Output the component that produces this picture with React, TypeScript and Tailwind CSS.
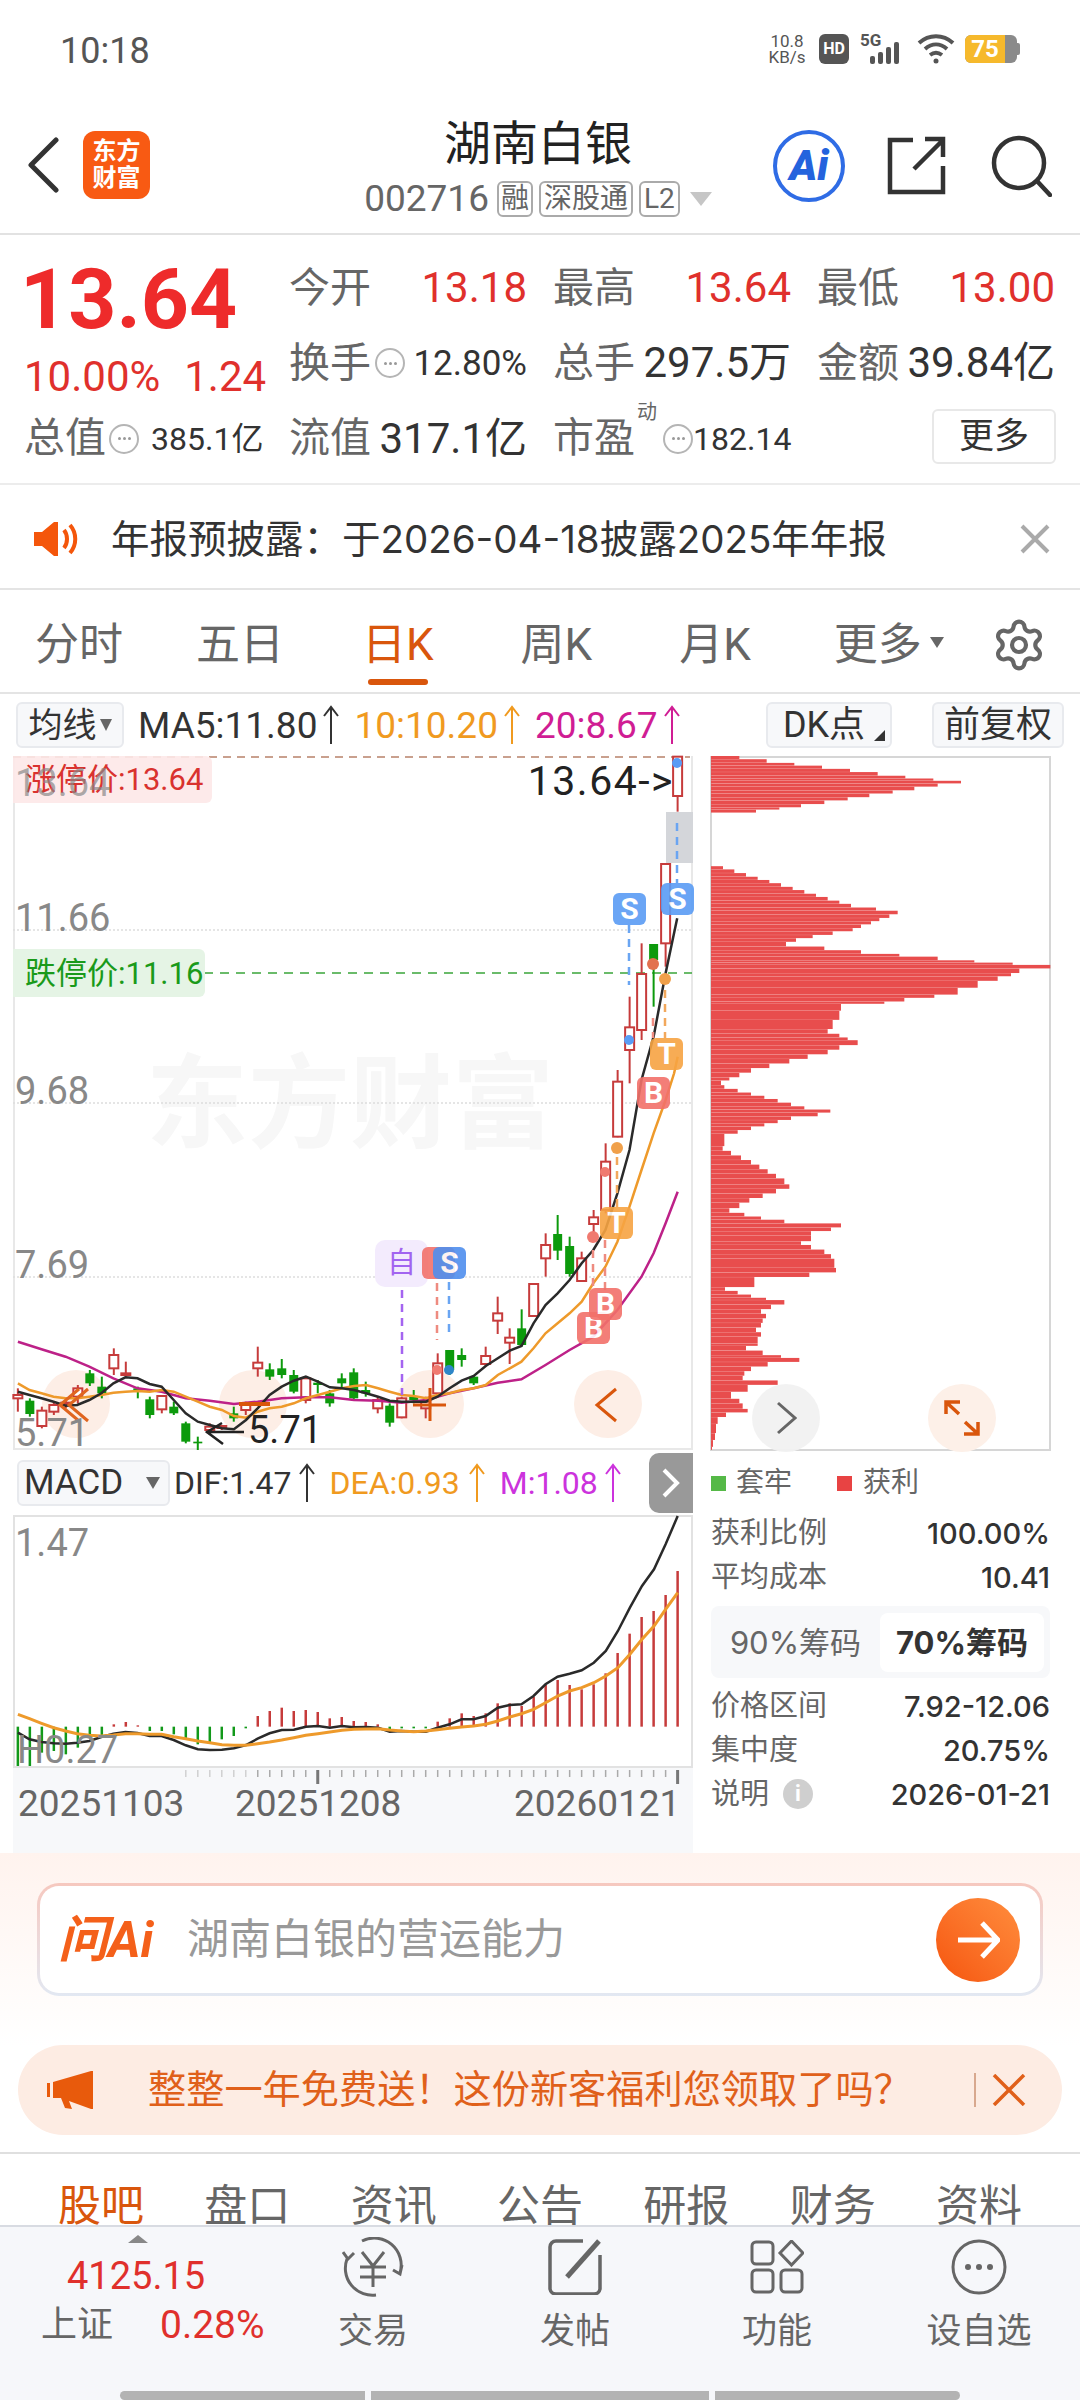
import { Settings } from "lucide-react";

type Candle = [number, number, number, number, "r" | "g"];

// candle data is [wickTop, bodyTop, bodyBottom, wickBottom, colour], y read off the screenshot
const CANDLES: Candle[] = [
  [985, 1005, 1015, 1055, "r"], [1015, 1022, 1062, 1070, "g"], [1040, 1052, 1098, 1105, "r"], [1025, 1035, 1055, 1065, "r"],
  [1020, 1028, 1034, 1045, "r"], [975, 985, 1010, 1030, "r"], [930, 940, 970, 978, "g"], [950, 980, 1000, 1015, "g"],
  [865, 885, 925, 945, "r"], [905, 940, 945, 950, "r"], [980, 985, 995, 1015, "g"], [1010, 1018, 1065, 1075, "g"],
  [1005, 1008, 1048, 1060, "r"], [1025, 1040, 1060, 1065, "g"], [1085, 1090, 1145, 1150, "g"], [1130, 1145, 1150, 1170, "g"],
  [1090, 1100, 1110, 1125, "r"], [1095, 1098, 1104, 1110, "r"], [1040, 1060, 1075, 1085, "g"], [1025, 1030, 1050, 1065, "r"],
  [860, 908, 925, 950, "r"], [910, 928, 950, 960, "g"], [897, 925, 945, 955, "g"], [930, 945, 995, 1000, "g"],
  [950, 955, 1020, 1030, "r"], [960, 968, 975, 1000, "g"], [990, 1000, 1030, 1040, "g"], [940, 955, 970, 985, "g"],
  [925, 937, 1015, 1020, "g"], [965, 990, 1000, 1010, "g"], [1010, 1020, 1045, 1060, "r"], [1030, 1037, 1088, 1100, "g"],
  [1010, 1015, 1072, 1075, "r"], [990, 1010, 1020, 1030, "g"], [1010, 1025, 1045, 1075, "r"], [880, 910, 1000, 1010, "r"],
  [870, 870, 930, 945, "g"], [865, 885, 900, 920, "g"], [945, 950, 970, 975, "g"], [860, 888, 912, 920, "r"],
  [710, 760, 782, 822, "r"], [805, 833, 848, 912, "r"], [748, 805, 855, 860, "g"], [670, 672, 768, 770, "r"],
  [520, 555, 595, 650, "r"], [465, 522, 572, 600, "g"], [530, 558, 642, 650, "g"], [575, 595, 663, 665, "r"],
  [450, 472, 492, 530, "r"], [250, 305, 450, 460, "r"], [30, 65, 230, 232, "r"], [-190, -98, -30, 70, "r"],
  [-350, -258, -90, -60, "r"], [-348, -348, -300, -160, "g"], [-588, -588, -350, -280, "r"], [-910, -910, -792, -745, "r"],
];

const MA5 = "40,995 66,1005 93,1015 120,1025 147,1037 173,1035 200,1020 227,1000 254,970 281,952 308,955 335,972 362,980 389,1020 416,1060 443,1085 470,1095 497,1105 524,1108 551,1080 577,1045 604,1005 631,980 658,962 685,950 712,965 739,982 766,985 793,990 820,1000 847,1010 873,1022 900,1025 927,1025 954,1025 980,1010 1007,985 1034,962 1061,948 1088,918 1115,895 1142,872 1168,858 1195,790 1222,735 1249,700 1276,660 1303,610 1329,570 1356,510 1383,400 1410,270 1437,60 1464,-70 1491,-260 1517,-425";
const MA10 = "40,970 66,990 93,1000 120,1010 147,1015 173,1015 200,1010 227,1005 254,998 281,995 308,993 335,995 362,990 389,995 416,1010 443,1025 470,1040 497,1050 524,1068 551,1073 577,1055 604,1045 631,1040 658,1030 685,1015 712,1005 739,995 766,985 793,978 820,975 847,985 873,995 900,1005 927,1008 954,1015 980,1005 1007,1000 1034,990 1061,985 1088,975 1115,945 1142,925 1168,905 1195,865 1222,820 1249,790 1276,760 1303,725 1329,670 1356,620 1383,545 1410,440 1437,330 1464,220 1491,120 1510,40 1518,-10";
const MA20 = "40,845 93,868 147,890 200,920 254,955 308,985 362,995 416,1015 470,1022 524,1032 577,1025 631,1015 685,1012 739,1012 793,1020 847,1022 900,1028 954,1020 1007,1000 1061,985 1115,968 1168,958 1222,915 1276,870 1329,830 1383,750 1437,650 1464,580 1491,490 1518,395";

const DIF = "40,875 66,895 93,903 120,907 147,908 173,905 200,900 227,888 254,878 281,873 308,876 335,885 362,885 389,897 416,913 443,925 470,927 497,926 524,922 551,912 577,893 604,877 631,867 658,866 685,857 712,855 739,860 766,855 793,859 820,858 847,860 873,872 900,870 927,872 954,872 980,860 1007,850 1034,835 1061,835 1088,825 1115,800 1142,792 1168,790 1195,765 1222,730 1249,707 1276,698 1303,688 1330,665 1357,630 1384,570 1411,500 1438,435 1465,385 1491,310 1518,225";
const DEA = "40,820 66,833 93,847 120,860 147,870 173,878 200,883 227,885 254,882 281,878 308,878 335,880 362,880 389,887 416,893 443,900 470,905 497,911 524,913 551,913 577,908 604,903 631,897 658,890 685,883 712,878 739,873 766,868 793,865 820,864 847,863 873,867 900,870 927,872 954,870 980,866 1007,862 1034,858 1061,855 1088,850 1115,840 1142,828 1168,818 1195,805 1222,785 1249,765 1276,750 1303,740 1330,725 1357,705 1384,680 1411,640 1438,595 1465,555 1491,505 1518,455";

// end of each macd bar, zero line sits at 857
const MACD_BARS = [975, 975, 935, 930, 940, 920, 885, 885, 850, 843, 853, 870, 870, 880, 897, 910, 905, 895, 885, 862, 825, 810, 800, 810, 807, 813, 832, 828, 840, 843, 850, 865, 862, 862, 862, 842, 832, 817, 825, 817, 787, 787, 795, 768, 732, 717, 732, 745, 730, 697, 636, 578, 528, 510, 462, 390];

// chip distribution outline, [y, width] from the right hand panel
const CHIPS: [number, number][] = [
  [15, 85], [22, 167], [30, 250], [36, 333], [43, 417], [50, 500], [58, 583], [64, 667], [69, 750], [75, 680], [82, 610], [90, 545], [97, 475], [105, 410], [112, 340], [120, 270], [127, 205], [132, 135],
  [255, 36], [262, 70], [270, 105], [278, 140], [285, 175], [292, 210], [300, 245], [307, 280], [315, 315], [322, 350], [330, 385], [337, 420], [345, 495], [352, 560], [360, 535], [368, 505], [375, 480], [382, 450], [390, 425], [397, 365], [405, 305], [412, 255], [420, 225], [430, 340], [438, 450], [446, 565], [452, 680], [460, 790], [465, 905], [470, 1018], [478, 925], [488, 900], [495, 860], [505, 800], [520, 740], [535, 670], [542, 580], [550, 520], [555, 390], [570, 385], [590, 365], [610, 350], [620, 385], [628, 410], [634, 440], [645, 385], [655, 350], [665, 290], [675, 235], [685, 175], [695, 120], [705, 85], [715, 55], [722, 30],
  [732, 40], [740, 80], [748, 120], [755, 160], [762, 200], [770, 240], [778, 280], [785, 358], [792, 320], [800, 240], [808, 200], [815, 160], [822, 120], [830, 80], [838, 40],
  [865, 35], [875, 60], [885, 90], [895, 120], [905, 145], [915, 170], [925, 195], [935, 220], [948, 235], [958, 195], [968, 155], [978, 115], [988, 85], [1000, 55], [1010, 100], [1018, 150], [1025, 220], [1033, 390], [1042, 360], [1050, 300], [1060, 300], [1072, 270], [1080, 300], [1090, 340], [1100, 360], [1110, 370], [1130, 375], [1140, 295], [1150, 130],
  [1172, 42], [1180, 80], [1188, 120], [1195, 165], [1200, 220], [1210, 180], [1220, 150], [1230, 165], [1240, 155], [1250, 150], [1260, 135], [1270, 150], [1280, 140], [1295, 140], [1300, 105], [1310, 155], [1320, 210], [1326, 265], [1335, 170], [1345, 120], [1355, 100], [1365, 95], [1375, 200], [1385, 110], [1400, 60], [1415, 85], [1425, 95], [1437, 110], [1445, 45], [1455, 20], [1470, 15], [1490, 12], [1505, 6], [1520, 3],
];

const cx = (i: number) => (40 + 26.87 * i) / 2.24;
const ky = (z: number) => 1060 + z / 3;
const my = (z: number) => 1440 + z / 3;
const pts = (s: string, f: (z: number) => number) =>
  s.split(" ").map((p) => {
    const [x, y] = p.split(",").map(Number);
    return `${(x / 2.24).toFixed(1)},${f(y).toFixed(1)}`;
  }).join(" ");

function Dots({ className = "" }: { className?: string }) {
  return (
    <span className={`inline-flex h-[30px] w-[30px] shrink-0 items-center justify-center gap-[2px] rounded-full border-2 border-[#b5b5b5] ${className}`}>
      <i className="h-[3px] w-[3px] rounded-full bg-[#999]" />
      <i className="h-[3px] w-[3px] rounded-full bg-[#999]" />
      <i className="h-[3px] w-[3px] rounded-full bg-[#999]" />
    </span>
  );
}

function Arrow({ color }: { color: string }) {
  return (
    <svg width="18" height="40" viewBox="0 0 18 40" className="shrink-0" fill="none" stroke={color} strokeWidth="2">
      <path d="M9 39V3M2 11l7-9 7 9" />
    </svg>
  );
}

function Stat({ label, value, small, red }: { label: string; value: string; small?: boolean; red?: boolean }) {
  return (
    <div className="flex w-[238px] items-center justify-between">
      <span className="text-[41px] leading-none text-[#666]">{label}</span>
      <span className={`leading-none ${small ? "text-[32px]" : "text-[42px]"} ${red ? "text-[#e0302c]" : "text-[#333]"}`}>{value}</span>
    </div>
  );
}

function Marker({ label, left, top, color }: { label: string; left: string; top: string; color: string }) {
  return (
    <div className={`absolute flex h-[32px] w-[33px] items-center justify-center rounded-[6px] text-[30px] leading-none font-bold text-white opacity-90 ${left} ${top} ${color}`}>
      {label}
    </div>
  );
}

function Row({ label, value, extra }: { label: string; value: string; extra?: boolean }) {
  return (
    <div className="flex h-[44px] items-center justify-between">
      <span className="flex items-center gap-[14px] text-[29px] leading-none text-[#666]">
        {label}
        {extra && (
          <i className="flex h-[30px] w-[30px] items-center justify-center rounded-full bg-[#cfcfcf] text-[22px] font-bold text-white not-italic">i</i>
        )}
      </span>
      <span className="text-[29px] leading-none font-medium text-[#333] [font-family:Inter,'Noto_Sans_CJK_SC',sans-serif]">{value}</span>
    </div>
  );
}

function NavItem({ label, children }: { label: string; children: React.ReactNode }) {
  return (
    <div className="flex w-[202px] flex-col items-center">
      <div className="flex h-[62px] items-center justify-center">{children}</div>
      <span className="mt-[16px] text-[35px] leading-none text-[#666]">{label}</span>
    </div>
  );
}

export default function App() {
  return (
    <div className="h-[2400px] w-[1080px] overflow-hidden bg-white [font-family:Roboto,'Noto_Sans_CJK_SC',sans-serif]">
      {/* status bar */}
      <div className="flex h-[105px] items-start justify-between pt-[33px] pr-[60px] pl-[60px]">
        <span className="text-[36px] leading-[36px] text-[#555]">10:18</span>
        <div className="flex items-center text-[#555]">
          <div className="flex w-[40px] flex-col items-center text-[17px] leading-[16px]">
            <span>10.8</span>
            <span>KB/s</span>
          </div>
          <div className="ml-[12px] flex h-[30px] w-[30px] items-center justify-center rounded-[6px] bg-[#555] text-[16px] font-bold text-white">HD</div>
          <div className="relative ml-[11px] h-[30px] w-[45px]">
            <span className="absolute top-[-2px] left-0 text-[17px] leading-none font-bold">5G</span>
            <svg width="45" height="30" viewBox="0 0 45 30" fill="#555" className="absolute top-0 left-0">
              <rect x="10" y="22" width="5" height="8" rx="2" />
              <rect x="18" y="18" width="5" height="12" rx="2" />
              <rect x="26" y="13" width="5" height="17" rx="2" />
              <rect x="34" y="8" width="5" height="22" rx="2" />
            </svg>
          </div>
          <svg width="38" height="30" viewBox="0 0 38 30" fill="none" stroke="#555" strokeWidth="4" className="ml-[12px]">
            <path d="M2 9c10-9 24-9 34 0M8 15c7-6 15-6 22 0M13 21c4-3 8-3 12 0" />
            <circle cx="19" cy="27" r="2.5" fill="#555" stroke="none" />
          </svg>
          <div className="ml-[10px] flex h-[28px] w-[52px] overflow-hidden rounded-[6px] bg-[#8a8a8a]">
            <div className="flex w-[40px] items-center justify-center bg-[#f6b92c] text-[24px] leading-none font-bold text-white">75</div>
          </div>
          <div className="h-[12px] w-[3px] rounded-r-[2px] bg-[#8a8a8a]" />
        </div>
      </div>

      {/* header */}
      <div className="relative flex h-[130px] items-center border-b-2 border-[#e2e2e2] pb-[8px] pl-[27px]">
        <svg width="32" height="56" viewBox="0 0 32 56" fill="none" stroke="#333" strokeWidth="5" strokeLinecap="round" strokeLinejoin="round">
          <path d="M29 3L4 28l25 25" />
        </svg>
        <div className="ml-[24px] flex h-[68px] w-[67px] flex-col items-center justify-center rounded-[12px] bg-[#f85a13] text-[24px] leading-[27px] font-bold text-white">
          <span>东方</span>
          <span>财富</span>
        </div>
        <div className="absolute top-[10px] left-[348px] flex w-[380px] flex-col items-center">
          <span className="text-[47px] leading-[58px] text-[#222]">湖南白银</span>
          <div className="mt-[7px] flex items-center">
            <span className="text-[37px] leading-none text-[#666]">002716</span>
            <span className="ml-[8px] rounded-[6px] border-2 border-[#aaa] px-[2px] py-[1px] text-[28px] leading-[30px] text-[#666]">融</span>
            <span className="ml-[6px] rounded-[6px] border-2 border-[#aaa] px-[3px] py-[1px] text-[28px] leading-[30px] text-[#666]">深股通</span>
            <span className="ml-[6px] rounded-[6px] border-2 border-[#aaa] px-[3px] py-[1px] text-[28px] leading-[30px] text-[#666]">L2</span>
            <i className="ml-[10px] h-0 w-0 border-x-[11px] border-t-[14px] border-x-transparent border-t-[#c6c6c6]" />
          </div>
        </div>
        <div className="absolute top-[25px] left-[773px] flex h-[72px] w-[72px] items-center justify-center rounded-full border-[4px] border-[#2f6ce5] text-[42px] leading-none font-black text-[#2463dd] italic">
          Ai
        </div>
        <svg width="60" height="60" viewBox="0 0 60 60" fill="none" stroke="#333" strokeWidth="4.5" className="absolute top-[31px] left-[887px]">
          <path d="M26 4H3v52h53V30M27 33L56 4M38 3h18v18" />
        </svg>
        <svg width="62" height="62" viewBox="0 0 62 62" fill="none" stroke="#333" strokeWidth="4.5" strokeLinecap="round" className="absolute top-[30px] left-[990px]">
          <circle cx="29" cy="28" r="25" />
          <path d="M47 46l13 14" />
        </svg>
      </div>

      {/* quote */}
      <div className="flex h-[250px] flex-col border-b-2 border-[#ececec] pt-[32px] pl-[24px]">
        <div className="flex">
          <div className="flex h-[117px] w-[265px] flex-col">
            <span className="-ml-[4px] text-[84px] leading-[66px] font-bold text-[#ee2b2b]">13.64</span>
            <div className="mt-[23px] flex text-[42px] leading-none text-[#e0302c]">
              <span>10.00%</span>
              <span className="ml-[24px]">1.24</span>
            </div>
          </div>
          <div className="flex flex-col gap-[33px]">
            <div className="flex gap-[26px]">
              <Stat label="今开" value="13.18" red />
              <Stat label="最高" value="13.64" red />
              <Stat label="最低" value="13.00" red />
            </div>
            <div className="flex gap-[26px]">
              <div className="flex w-[238px] items-center">
                <span className="text-[41px] leading-none text-[#666]">换手</span>
                <Dots className="ml-[4px]" />
                <span className="ml-auto text-[35px] leading-none text-[#333]">12.80%</span>
              </div>
              <Stat label="总手" value="297.5万" />
              <Stat label="金额" value="39.84亿" />
            </div>
          </div>
        </div>
        <div className="mt-[27px] flex items-center">
          <div className="flex w-[265px] items-center">
            <span className="text-[41px] leading-none text-[#666]">总值</span>
            <Dots className="ml-[3px]" />
            <span className="ml-[12px] text-[32px] leading-none text-[#333]">385.1亿</span>
          </div>
          <Stat label="流值" value="317.1亿" />
          <div className="ml-[26px] flex w-[238px] items-center">
            <span className="text-[41px] leading-none whitespace-nowrap text-[#666]">市盈</span>
            <div className="relative ml-[28px] flex shrink-0 items-center">
              <span className="absolute top-[-22px] left-[-26px] text-[20px] leading-none text-[#666]">动</span>
              <Dots />
            </div>
            <span className="ml-auto text-[32px] leading-none text-[#333]">182.14</span>
          </div>
          <div className="ml-[141px] flex h-[55px] w-[124px] -translate-y-[2px] items-center justify-center rounded-[6px] border-2 border-[#e8e8e8] text-[35px] leading-none text-[#333]">更多</div>
        </div>
      </div>

      {/* notice */}
      <div className="flex h-[105px] items-center border-b-2 border-[#e4e4e4] pt-[5px] pr-[30px] pl-[34px]">
        <svg width="44" height="36" viewBox="0 0 44 36" fill="#f4560b">
          <path d="M0 11h8L20 1h4v34h-4L8 25H0z" />
          <path d="M30 9c4 5 4 13 0 18M36 4c7 8 7 20 0 28" fill="none" stroke="#f4560b" strokeWidth="4" />
        </svg>
        <span className="ml-[33px] text-[38.5px] leading-none whitespace-nowrap text-[#333] [font-family:Inter,'Noto_Sans_CJK_SC',sans-serif]">年报预披露：于2026-04-18披露2025年年报</span>
        <svg width="30" height="30" viewBox="0 0 30 30" fill="none" stroke="#aaa" strokeWidth="4" className="ml-auto">
          <path d="M2 2l26 26M28 2L2 28" />
        </svg>
      </div>

      {/* period tabs */}
      <div className="relative flex h-[104px] items-center border-b-2 border-[#e4e4e4] pt-[7px] pl-[35px] text-[44px] leading-none text-[#666]">
        <span>分时</span>
        <span className="ml-[73px]">五日</span>
        <span className="ml-[78px] text-[#d9560c]">日K</span>
        <span className="ml-[87px]">周K</span>
        <span className="ml-[87px]">月K</span>
        <span className="ml-[83px]">更多</span>
        <i className="mt-[-4px] ml-[8px] h-0 w-0 border-x-[7px] border-t-[11px] border-x-transparent border-t-[#666]" />
        <Settings size={56} strokeWidth={1.8} className="ml-[47px] text-[#666]" />
        <div className="absolute bottom-[7px] left-[368px] h-[6px] w-[60px] rounded-full bg-[#d9560c]" />
      </div>

      {/* chart toolbar */}
      <div className="flex h-[62px] items-start pt-[8px] pl-[16px]">
        <div className="flex h-[46px] w-[108px] items-center justify-center gap-[3px] rounded-[6px] border-2 border-[#e8eaee] bg-[#f7f8fa] text-[34px] leading-none text-[#333]">
          均线
          <i className="h-0 w-0 border-x-[6px] border-t-[12px] border-x-transparent border-t-[#666]" />
        </div>
        <div className="ml-[14px] flex h-[46px] w-[628px] items-center text-[37px] leading-none text-[#333]">
          MA5:11.80
          <span className="ml-[5px]"><Arrow color="#333" /></span>
          <span className="ml-[14px] text-[#f09a1f]">10:10.20</span>
          <span className="ml-[5px]"><Arrow color="#f09a1f" /></span>
          <span className="ml-[14px] text-[#d01d94]">20:8.67</span>
          <span className="ml-[5px]"><Arrow color="#d01d94" /></span>
        </div>
        <div className="relative flex h-[46px] w-[126px] items-center justify-center rounded-[6px] border-2 border-[#e8eaee] bg-[#f7f8fa] pr-[10px] text-[36px] leading-none text-[#333]">
          DK点
          <i className="absolute right-[5px] bottom-[5px] h-0 w-0 border-b-[11px] border-l-[11px] border-b-[#333] border-l-transparent" />
        </div>
        <div className="ml-[40px] flex h-[46px] w-[132px] items-center justify-center rounded-[6px] border-2 border-[#e8eaee] bg-[#f7f8fa] text-[36px] leading-none text-[#333]">前复权</div>
      </div>

      {/* kline + chip distribution */}
      <div className="flex h-[694px] pl-[13px]">
        <div className="relative h-[694px] w-[680px] border-x-2 border-b-2 border-[#e8e8e8]">
          <div className="absolute top-[298px] left-[131px] text-[102px] leading-none font-bold whitespace-nowrap text-[#f7f7f7]">东方财富</div>
          <div className="absolute top-[56px] right-0 h-[51px] w-[27px] translate-x-[2px] bg-[#d4d6da]" />
          {/* chart nav buttons sit under the candles, their glyphs over them */}
          <div className="absolute top-[614px] left-[27px] h-[68px] w-[68px] rounded-full bg-[#fdeee6]" />
          <div className="absolute top-[614px] left-[204px] h-[68px] w-[68px] rounded-full bg-[#fdeee6]" />
          <div className="absolute top-[614px] left-[381px] h-[68px] w-[68px] rounded-full bg-[#fdeee6]" />
          <div className="absolute top-[614px] left-[559px] h-[68px] w-[68px] rounded-full bg-[#fdeee6]" />
          <svg width="680" height="694" viewBox="13 756 680 694" className="absolute top-0 left-[-2px] overflow-visible" fill="none">
            <path d="M13 757H690" stroke="#c9a08e" strokeWidth="2" strokeDasharray="8 6" />
            <path d="M13 930H692M13 1103H692M13 1277H692" stroke="#ddd" strokeWidth="1.5" strokeDasharray="2 2" />
            <path d="M204 973H692" stroke="#3aa53a" strokeWidth="1.5" strokeDasharray="9 7" />
            {CANDLES.map(([wt, bt, bb, wb, c], i) => {
              const x = cx(i);
              return c === "r" ? (
                <g key={i} stroke="#c63b3b" strokeWidth="2">
                  <path d={`M${x} ${ky(wt)}V${ky(wb)}`} />
                  <rect x={x - 4.5} y={ky(bt)} width="9" height={(bb - bt) / 3} fill="#fff" />
                </g>
              ) : (
                <g key={i} stroke="#0c9a0c" strokeWidth="2">
                  <path d={`M${x} ${ky(wt)}V${ky(wb)}`} />
                  <rect x={x - 4.5} y={ky(bt)} width="9" height={(bb - bt) / 3} fill="#0c9a0c" stroke="none" />
                </g>
              );
            })}
            <polyline points={pts(MA20, ky)} stroke="#bd2188" strokeWidth="2.5" />
            <polyline points={pts(MA10, ky)} stroke="#ee9a2b" strokeWidth="2.5" />
            <polyline points={pts(MA5, ky)} stroke="#2a2a2a" strokeWidth="2.5" />
            <path d="M629 925V985" stroke="#6aa5f2" strokeWidth="2.5" strokeDasharray="8 6" />
            <path d="M677 823V883" stroke="#6aa5f2" strokeWidth="2.5" strokeDasharray="8 6" />
            <path d="M665 990V1038" stroke="#f2a85c" strokeWidth="2.5" strokeDasharray="8 6" />
            <path d="M653 1018V1038" stroke="#ee8b80" strokeWidth="2.5" strokeDasharray="8 6" />
            <path d="M617 1157V1207" stroke="#f2a85c" strokeWidth="2.5" strokeDasharray="8 6" />
            <path d="M593 1250V1290M605 1240V1290" stroke="#ee8b80" strokeWidth="2.5" strokeDasharray="8 6" />
            <path d="M402 1290V1395" stroke="#a464f0" strokeWidth="2.5" strokeDasharray="8 6" />
            <path d="M437 1283V1340" stroke="#ee8b80" strokeWidth="2.5" strokeDasharray="8 6" />
            <path d="M449 1282V1338" stroke="#6aa5f2" strokeWidth="2.5" strokeDasharray="8 6" />
            <circle cx="677" cy="763" r="5" fill="#5a9cf5" />
            <circle cx="629" cy="1040" r="5" fill="#5a9cf5" />
            <circle cx="653" cy="964" r="6" fill="#e2714f" />
            <circle cx="665" cy="979" r="6" fill="#f0a04a" />
            <circle cx="617" cy="1148" r="6" fill="#f0a04a" />
            <circle cx="605" cy="1172" r="5" fill="#f07a70" />
            <circle cx="593" cy="1237" r="6" fill="#f07a70" />
            <circle cx="437" cy="1370" r="5" fill="#f07a70" />
            <circle cx="449" cy="1370" r="5" fill="#2e86c8" />
            <path d="M222 1423l-15 9 16 12M206 1432h38" stroke="#222" strokeWidth="2.5" />
            <path d="M79 1389L60 1405l19 16M88 1389L69 1405l19 16" stroke="#e0651f" strokeWidth="3" />
            <path d="M239 1404H270" stroke="#d9560c" strokeWidth="4" />
            <path d="M430 1388V1421M413 1405H446" stroke="#d9560c" strokeWidth="3" />
            <path d="M616 1389L597 1405l19 16" stroke="#d9560c" strokeWidth="3" />
          </svg>

          <div className="absolute top-[0px] left-[-2px] flex h-[47px] w-[199px] items-center rounded-r-[6px] bg-[#fde8e8]/90 pl-[12px] text-[31px] leading-none text-[#d9322e]">涨停价:13.64</div>
          <span className="absolute top-[8px] left-[0px] text-[38px] leading-none text-[#888]/70">13.64</span>
          <span className="absolute top-[5px] right-[17px] text-[41px] leading-none tracking-[1.5px] text-[#222]">13.64-&gt;</span>
          <span className="absolute top-[143px] left-[0px] text-[38px] leading-none text-[#888]">11.66</span>
          <div className="absolute top-[193px] left-[-2px] flex h-[48px] w-[192px] items-center rounded-r-[6px] bg-[#e5f4e5] pl-[12px] text-[31px] leading-none text-[#1a9a1a]">跌停价:11.16</div>
          <span className="absolute top-[316px] left-[0px] text-[38px] leading-none text-[#888]">9.68</span>
          <span className="absolute top-[490px] left-[0px] text-[38px] leading-none text-[#888]">7.69</span>
          <span className="absolute top-[658px] left-[0px] text-[38px] leading-none text-[#888]">5.71</span>
          <span className="absolute top-[655px] left-[233px] text-[38px] leading-none text-[#222]">5.71</span>

          <Marker label="S" left="left-[598px]" top="top-[137px]" color="bg-[#5a9cf5]" />
          <Marker label="S" left="left-[646px]" top="top-[127px]" color="bg-[#5a9cf5]" />
          <Marker label="T" left="left-[635px]" top="top-[282px]" color="bg-[#f7a443]" />
          <Marker label="B" left="left-[622px]" top="top-[321px]" color="bg-[#f2716a]" />
          <Marker label="T" left="left-[585px]" top="top-[451px]" color="bg-[#f7a443]" />
          <Marker label="B" left="left-[562px]" top="top-[556px]" color="bg-[#f2716a]" />
          <Marker label="B" left="left-[574px]" top="top-[532px]" color="bg-[#f2716a]" />
          <div className="absolute top-[484px] left-[360px] flex h-[47px] w-[53px] items-center justify-center rounded-[10px] bg-[#f3ebfd] text-[29px] leading-none text-[#a264f0]">自</div>
          <Marker label="" left="left-[407px]" top="top-[491px]" color="bg-[#f2716a]" />
          <Marker label="S" left="left-[418px]" top="top-[491px]" color="bg-[#4f8fee]" />
        </div>

        <div className="relative ml-[17px] h-[695px] w-[341px] border-2 border-[#d6d6d6]">
          <svg width="341" height="695" viewBox="0 0 341 695" className="absolute top-[-2px] left-[-2px]" fill="#e84d4d">
            {CHIPS.map(([y, w], i) => {
              const next = CHIPS[i + 1];
              const h = next && next[0] - y <= 40 ? (next[0] - y) / 2.178 : 3;
              return <rect key={i} x="1" y={(y - 15) / 2.178} width={w / 3} height={Math.max(h - 0.15, 1)} />;
            })}
          </svg>
          <div className="absolute top-[626px] left-[40px] flex h-[68px] w-[68px] items-center justify-center rounded-full bg-[#f1f1f1]/95">
            <svg width="22" height="34" viewBox="0 0 22 34" fill="none" stroke="#666" strokeWidth="3"><path d="M3 2l17 15L3 32" /></svg>
          </div>
          <div className="absolute top-[626px] left-[216px] flex h-[68px] w-[68px] items-center justify-center rounded-full bg-[#fdf0e8]">
            <svg width="36" height="36" viewBox="0 0 36 36" fill="none" stroke="#d9560c" strokeWidth="3.5"><path d="M2 14V2h14M2 2l13 12M34 22v12H20M34 34L21 22" /></svg>
          </div>
        </div>
      </div>

      {/* macd + chip summary */}
      <div className="flex h-[403px]">
        <div className="w-[692px] pl-[13px]">
          <div className="relative flex h-[65px] items-center">
            <div className="ml-[4px] flex h-[46px] w-[153px] items-center justify-between rounded-[6px] border-2 border-[#e8eaee] bg-[#f7f8fa] pr-[8px] pl-[5px] text-[35px] leading-none text-[#333]">
              MACD
              <i className="h-0 w-0 border-x-[7px] border-t-[12px] border-x-transparent border-t-[#666]" />
            </div>
            <div className="ml-[4px] flex items-center text-[32px] leading-none text-[#333]">
              DIF:1.47
              <span className="ml-[6px]"><Arrow color="#333" /></span>
              <span className="ml-[14px] text-[#f09a1f]">DEA:0.93</span>
              <span className="ml-[8px]"><Arrow color="#f09a1f" /></span>
              <span className="ml-[14px] text-[#cc33dd]">M:1.08</span>
              <span className="ml-[6px]"><Arrow color="#cc33dd" /></span>
            </div>
            <div className="absolute top-[3px] right-[-1px] flex h-[60px] w-[44px] items-center justify-center rounded-l-[10px] bg-[#999]">
              <svg width="20" height="32" viewBox="0 0 20 32" fill="none" stroke="#fff" strokeWidth="4"><path d="M3 3l13 13L3 29" /></svg>
            </div>
          </div>
          <div className="relative h-[253px] w-[680px] border-2 border-[#e2e2e2]">
            <svg width="680" height="253" viewBox="13 1514 680 253" className="absolute top-[-2px] left-[-2px]" fill="none">
              {MACD_BARS.map((z, i) => (
                <path key={i} d={`M${cx(i)} ${my(857)}V${my(z)}`} stroke={z > 857 ? "#12991a" : "#c63b3b"} strokeWidth="2.5" />
              ))}
              <polyline points={pts(DIF, my)} stroke="#2a2a2a" strokeWidth="2.5" />
              <polyline points={pts(DEA, my)} stroke="#ee9a2b" strokeWidth="3" />
            </svg>
            <span className="absolute top-[7px] left-[0px] text-[38px] leading-none text-[#888]">1.47</span>
            <span className="absolute top-[214px] left-[2px] text-[38px] leading-none text-[#888]">H0.27</span>
          </div>
          <div className="relative h-[85px] w-[680px] bg-[#f7f8fa]">
            <svg width="680" height="24" viewBox="13 1767 680 24" className="absolute top-0 left-0" fill="none">
              {MACD_BARS.map((_, i) =>
                i >= 14 ? (
                  <path
                    key={i}
                    d={`M${cx(i)} 1769V${i === 25 || i === 55 ? 1783 : 1776}`}
                    stroke={i === 25 || i === 55 ? "#777" : "#aaa"}
                    strokeWidth={i === 25 || i === 55 ? 3 : 1.5}
                    opacity={i < 20 ? 0.5 : 1}
                  />
                ) : null,
              )}
            </svg>
            <span className="absolute top-[17px] left-[5px] text-[37px] leading-none text-[#666]">20251103</span>
            <span className="absolute top-[17px] left-[222px] text-[37px] leading-none text-[#666]">20251208</span>
            <span className="absolute top-[17px] left-[501px] text-[37px] leading-none text-[#666]">20260121</span>
          </div>
        </div>
        <div className="ml-[19px] w-[339px] pt-[19px]">
          <div className="flex h-[28px] items-center text-[28px] leading-none text-[#666]">
            <i className="h-[15px] w-[15px] bg-[#55b947]" />
            <span className="ml-[10px]">套牢</span>
            <i className="ml-[45px] h-[15px] w-[15px] bg-[#e84343]" />
            <span className="ml-[11px]">获利</span>
          </div>
          <div className="mt-[14px]">
            <Row label="获利比例" value="100.00%" />
            <Row label="平均成本" value="10.41" />
          </div>
          <div className="mt-[7px] flex h-[72px] items-center rounded-[8px] bg-[#f7f8fa] pr-[6px] [font-family:Inter,'Noto_Sans_CJK_SC',sans-serif]">
            <span className="w-[169px] text-center text-[31px] leading-none text-[#666]">90%筹码</span>
            <span className="flex h-[59px] w-[164px] items-center justify-center rounded-[8px] bg-white text-[31px] leading-none font-bold text-[#333]">70%筹码</span>
          </div>
          <div className="mt-[6px]">
            <Row label="价格区间" value="7.92-12.06" />
            <Row label="集中度" value="20.75%" />
            <Row label="说明" value="2026-01-21" extra />
          </div>
        </div>
      </div>

      {/* ask ai */}
      <div className="h-[192px] bg-gradient-to-b from-[#fff3ee] to-white px-[37px] pt-[30px]">
        <div className="h-[113px] w-[1006px] rounded-[22px] bg-gradient-to-b from-[#f6c8bf] to-[#e2e8f2] p-[3px]">
          <div className="flex h-[107px] items-center rounded-[19px] bg-white pr-[20px] pl-[18px]">
            <span className="w-[112px] text-[50px] leading-none font-bold whitespace-nowrap text-[#f4601a] italic">问Ai</span>
            <span className="ml-[17px] text-[42px] leading-none text-[#999]">湖南白银的营运能力</span>
            <div className="ml-auto flex h-[84px] w-[84px] items-center justify-center rounded-full bg-gradient-to-tr from-[#f5540a] to-[#ff8d3c]">
              <svg width="44" height="44" viewBox="0 0 44 44" fill="none" stroke="#fff" strokeWidth="5">
                <path d="M2 22h38M26 5l16 17-16 17" />
              </svg>
            </div>
          </div>
        </div>
      </div>

      {/* promo */}
      <div className="px-[18px]">
        <div className="flex h-[90px] items-center rounded-full bg-[#fdece3] pl-[29px]">
          <svg width="46" height="38" viewBox="0 0 46 38" fill="#e85a0c">
            <rect x="0" y="12" width="3" height="14" />
            <path d="M6 11L44 0h2v38h-2L22 30l3 8-7-1-4-10H6z" />
          </svg>
          <span className="ml-[55px] text-[38.2px] leading-none whitespace-nowrap text-[#e0601a]">整整一年免费送！这份新客福利您领取了吗？</span>
          <div className="ml-[62px] h-[34px] w-[2px] bg-[#d8a88e]" />
          <svg width="34" height="32" viewBox="0 0 34 32" fill="none" stroke="#e0601a" strokeWidth="3.5" className="ml-[16px]">
            <path d="M2 1l30 30M32 1L2 31" />
          </svg>
        </div>
      </div>

      {/* bottom tabs, the nav bar covers their lower edge */}
      <div className="mt-[17px] flex h-[73px] justify-between overflow-hidden border-t-2 border-[#dfdfdf] px-[58px] pt-[28px] text-[43px] leading-[48px] text-[#666]">
        <span className="text-[#d9560c]">股吧</span>
        <span>盘口</span>
        <span>资讯</span>
        <span>公告</span>
        <span>研报</span>
        <span>财务</span>
        <span>资料</span>
      </div>

      {/* bottom nav */}
      <div className="relative h-[176px] border-t-2 border-[#d8dbe2] bg-[#f6f7fa]">
        <div className="flex">
          <div className="relative h-[120px] w-[275px]">
            <i className="absolute top-[8px] left-[128px] h-0 w-0 border-x-[10px] border-b-[8px] border-x-transparent border-b-[#888]" />
            <span className="absolute top-[30px] left-[67px] text-[38px] leading-none text-[#e0302c]">4125.15</span>
            <span className="absolute top-[80px] left-[41px] text-[36px] leading-none text-[#666]">上证</span>
            <span className="absolute top-[79px] left-[160px] text-[39px] leading-none text-[#e0302c]">0.28%</span>
          </div>
          <div className="flex pt-[9px]">
            <NavItem label="交易">
              <svg width="62" height="60" viewBox="0 0 62 60" fill="none" stroke="#666" strokeWidth="3">
                <path d="M5 22a27 27 0 0 0 29 36M20 4A27 27 0 0 1 58 36M1 15l5 7 6-6M60 28l-2 9-7-4" />
                <path d="M22 15l11 14 11-14M20 30h26M20 40h26M33 29v21" strokeWidth="3" transform="translate(-2 0)" />
              </svg>
            </NavItem>
            <NavItem label="发帖">
              <svg width="56" height="56" viewBox="0 0 56 56" fill="none" stroke="#666" strokeWidth="3.5">
                <path d="M36 2H9a6 6 0 0 0-6 6v42a6 6 0 0 0 6 5h38a6 6 0 0 0 6-5V16" />
                <path d="M52 2L20 38" strokeWidth="5" />
              </svg>
            </NavItem>
            <NavItem label="功能">
              <svg width="54" height="54" viewBox="0 0 54 54" fill="none" stroke="#666" strokeWidth="3">
                <rect x="2" y="2" width="21" height="22" rx="4" />
                <rect x="2" y="30" width="21" height="22" rx="4" />
                <rect x="31" y="30" width="21" height="22" rx="4" />
                <path d="M41.500 1L53 13 41.500 25 30 13z" />
              </svg>
            </NavItem>
            <NavItem label="设自选">
              <svg width="56" height="56" viewBox="0 0 56 56" fill="#666">
                <circle cx="28" cy="28" r="26" fill="none" stroke="#666" strokeWidth="3" />
                <circle cx="17" cy="28" r="3" />
                <circle cx="28" cy="28" r="3" />
                <circle cx="39" cy="28" r="3" />
              </svg>
            </NavItem>
          </div>
        </div>
        <div className="absolute top-[164px] left-[120px] flex gap-[6px]">
          <i className="h-[9px] w-[245px] rounded-l-full bg-[#b3b3b3]" />
          <i className="h-[9px] w-[338px] bg-[#b3b3b3]" />
          <i className="h-[9px] w-[245px] rounded-r-full bg-[#b3b3b3]" />
        </div>
      </div>
    </div>
  );
}
